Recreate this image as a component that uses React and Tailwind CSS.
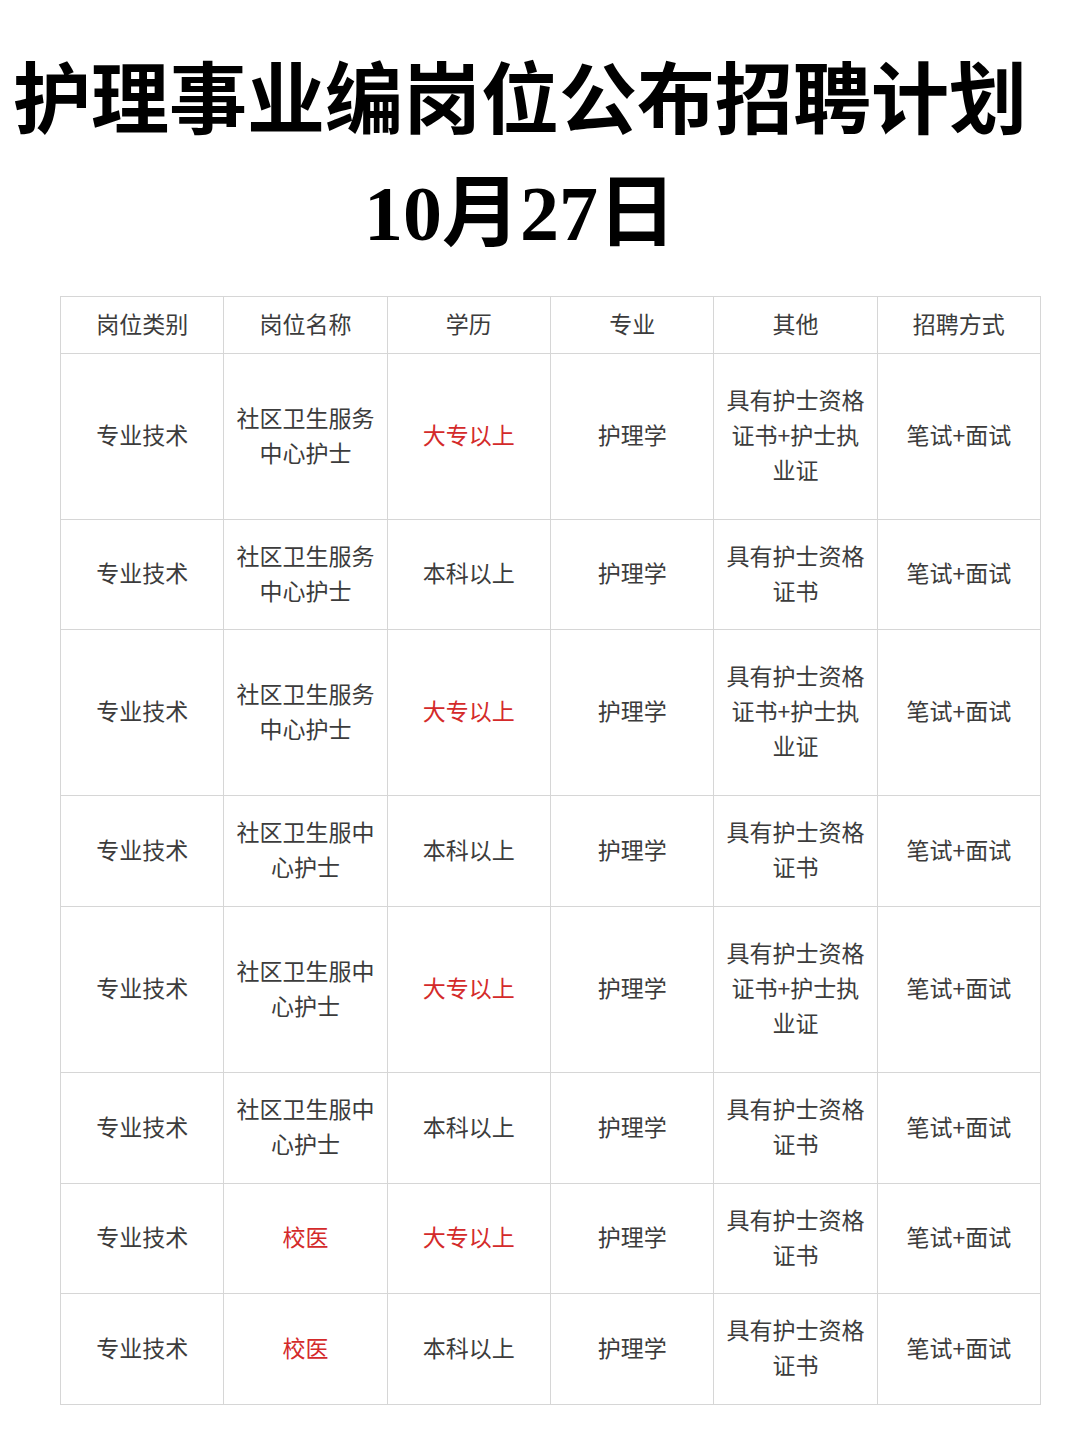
const rows = [
  { h: "h-[166px]", name: "社区卫生服务中心护士", edu: "大专以上", other: "具有护士资格证书+护士执业证" },
  { h: "h-[110px]", name: "社区卫生服务中心护士", edu: "本科以上", other: "具有护士资格证书" },
  { h: "h-[166px]", name: "社区卫生服务中心护士", edu: "大专以上", other: "具有护士资格证书+护士执业证" },
  { h: "h-[111px]", name: "社区卫生服中心护士", edu: "本科以上", other: "具有护士资格证书" },
  { h: "h-[166px]", name: "社区卫生服中心护士", edu: "大专以上", other: "具有护士资格证书+护士执业证" },
  { h: "h-[111px]", name: "社区卫生服中心护士", edu: "本科以上", other: "具有护士资格证书" },
  { h: "h-[110px]", name: "校医", nameRed: true, edu: "大专以上", other: "具有护士资格证书" },
  { h: "h-[111px]", name: "校医", nameRed: true, edu: "本科以上", other: "具有护士资格证书" },
];

const headers = ["岗位类别", "岗位名称", "学历", "专业", "其他", "招聘方式"];

function Cell({ children, red, h }) {
  return (
    <div
      className={`${h} flex items-center justify-center border-r border-b border-[#d6d6d6] px-[11px] pb-[4px] text-center text-[23px] leading-[35px] ${
        red ? "text-[#d42a2a]" : "text-[#3c3c3c]"
      }`}
    >
      <span>{children}</span>
    </div>
  );
}

export default function App() {
  return (
    <div
      className="w-[1080px] min-h-[1440px] bg-white"
      style={{ fontFamily: '"Noto Sans CJK SC", "Noto Sans", sans-serif' }}
    >
      <div
        className="pt-[46px] pr-[40px] text-center font-bold text-black text-[78px] leading-[112px]"
        style={{ fontFamily: '"Liberation Serif", "Noto Sans CJK SC", serif' }}
      >
        <div className="whitespace-nowrap">护理事业编岗位公布招聘计划</div>
        <div>10月27日</div>
      </div>

      <div className="mt-[26px] ml-[60px] w-[981px] grid grid-cols-6 border-l border-t border-[#d6d6d6]">
        {headers.map((t) => (
          <Cell key={t} h="h-[57px]">
            {t}
          </Cell>
        ))}
        {rows.map((r, i) => (
          <div key={i} className="contents">
            <Cell h={r.h}>专业技术</Cell>
            <Cell h={r.h} red={r.nameRed}>
              {r.name}
            </Cell>
            <Cell h={r.h} red={r.edu === "大专以上"}>
              {r.edu}
            </Cell>
            <Cell h={r.h}>护理学</Cell>
            <Cell h={r.h}>{r.other}</Cell>
            <Cell h={r.h}>笔试+面试</Cell>
          </div>
        ))}
      </div>
    </div>
  );
}
